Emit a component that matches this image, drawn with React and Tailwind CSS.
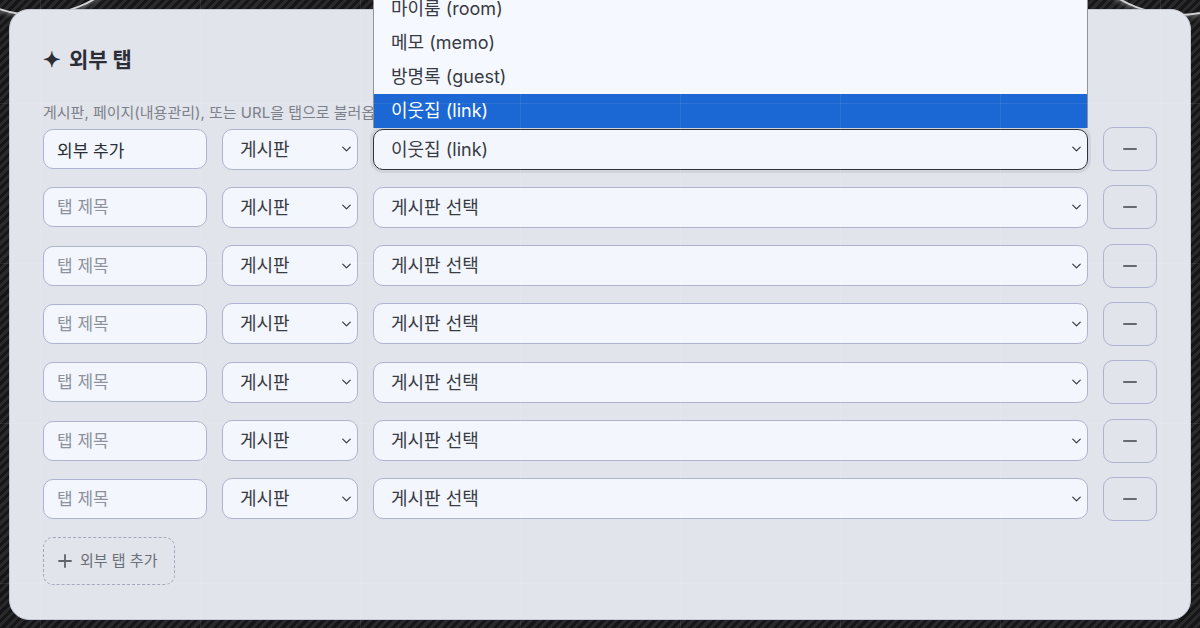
import { useState } from "react";

const FONT = { fontFamily: 'Inter, "Noto Sans CJK KR", sans-serif' };

const TYPES = ["게시판", "페이지", "URL"];
const TARGETS = ["게시판 선택", "마이룸 (room)", "메모 (memo)", "방명록 (guest)", "이웃집 (link)"];

const Chevron = () => (
  <svg width="15" height="15" viewBox="0 0 24 24" fill="none" stroke="#3a3d45" strokeWidth="2" strokeLinecap="round" strokeLinejoin="round">
    <path d="m6 9 6 6 6-6" />
  </svg>
);

const SelectBox = ({ value, options, className, focused, onChange }) => (
  <div className={`relative ${className}`}>
    <select
      value={value}
      onChange={(e) => onChange(e.target.value)}
      className={`appearance-none w-full h-[41px] rounded-[10px] bg-[#f3f6fd] text-[18px] text-[#383b43] pl-[17px] pr-8 outline-none ${
        focused ? "border-[1.5px] border-[#30323a] shadow-[0_0_0_3px_rgba(160,165,180,0.25)]" : "border border-[#aeb4cf]"
      }`}
    >
      {options.map((o) => (
        <option key={o}>{o}</option>
      ))}
    </select>
    <span className="pointer-events-none absolute right-[4px] top-1/2 -translate-y-1/2">
      <Chevron />
    </span>
  </div>
);

const TabRow = ({ row, index, onChange, onRemove, open }) => (
  <div className="flex items-center gap-[15px] h-[44px] relative">
    <input
      value={row.title}
      onChange={(e) => onChange(index, { ...row, title: e.target.value })}
      placeholder="탭 제목"
      className="w-[164px] h-[40px] rounded-[10px] border border-[#aeb4cf] bg-[#f3f6fd] px-[13px] text-[17px] text-[#2a2d34] placeholder:text-[#8c919c] outline-none"
    />
    <SelectBox
      className="w-[136px]"
      value={row.type}
      options={TYPES}
      onChange={(v) => onChange(index, { ...row, type: v })}
    />
    <div className="relative flex-1">
      <SelectBox
        className="w-full"
        value={row.target}
        options={TARGETS}
        focused={open}
        onChange={(v) => onChange(index, { ...row, target: v })}
      />
      {open && (
        <ul className="absolute left-0 right-0 bottom-full mb-[1px] bg-[#f5f8fe] border-x border-[#8f939c] text-[18px] text-[#383b43] z-20">
          {TARGETS.slice(1).map((t) => (
            <li
              key={t}
              className={`h-[34px] flex items-center pl-[17px] ${t === row.target ? "bg-[#1b67d3] text-white" : ""}`}
            >
              {t}
            </li>
          ))}
        </ul>
      )}
    </div>
    <button
      onClick={() => onRemove(index)}
      className="w-[54px] h-[44px] rounded-[10px] border border-[#aeb4cf] flex items-center justify-center"
    >
      <span className="block w-[14px] h-[2px] bg-[#666a73] rounded" />
    </button>
  </div>
);

export default function App() {
  const [rows, setRows] = useState([
    { title: "외부 추가", type: "게시판", target: "이웃집 (link)" },
    ...Array.from({ length: 6 }, () => ({ title: "", type: "게시판", target: "게시판 선택" })),
  ]);

  const updateRow = (i, r) => setRows(rows.map((x, idx) => (idx === i ? r : x)));
  const removeRow = (i) => setRows(rows.filter((_, idx) => idx !== i));
  const addRow = () => setRows([...rows, { title: "", type: "게시판", target: "게시판 선택" }]);

  return (
    <div
      style={FONT}
      className="relative w-[1200px] h-[628px] overflow-hidden bg-[repeating-linear-gradient(135deg,#161618_0px,#161618_3px,#2a2a2d_3px,#2a2a2d_6px)] p-[9px]"
    >
      {/* decorative rings */}
      <div className="absolute left-[-80px] top-[-216px] w-[232px] h-[232px] rounded-full border-2 border-white/80 shadow-[0_0_6px_rgba(255,255,255,0.5)]" />
      <div className="absolute left-[1062px] top-[-216px] w-[232px] h-[232px] rounded-full border-2 border-white/80 shadow-[0_0_6px_rgba(255,255,255,0.5)]" />

      <div className="relative z-10 h-[611px] rounded-[20px] border border-[#c3c8d6] bg-[#e1e4ea] px-[33px] pt-[36px]">
        <h2 className="flex items-center gap-[8px] text-[21px] font-bold text-[#2b2e36] leading-[28px]">
          <span className="text-[21px]">✦</span>
          외부 탭
        </h2>
        <p className="mt-[29px] text-[15px] leading-[20px] text-[#7c808b]">
          게시판, 페이지(내용관리), 또는 URL을 탭으로 불러옵니다.
        </p>

        <div className="mt-[4px] flex flex-col gap-[14.33px]">
          {rows.map((row, i) => (
            <TabRow key={i} row={row} index={i} open={i === 0} onChange={updateRow} onRemove={removeRow} />
          ))}
        </div>

        <button
          onClick={addRow}
          className="mt-[16px] h-[48px] w-[132px] px-[14px] rounded-[10px] border border-dashed border-[#a3a8bc] flex items-center gap-[8px] text-[15px] text-[#6b6f78]"
        >
          <svg width="14" height="14" viewBox="0 0 14 14" stroke="#5f636c" strokeWidth="1.8" strokeLinecap="round">
            <path d="M7 1v12M1 7h12" />
          </svg>
          외부 탭 추가
        </button>
      </div>

      {/* faint grid */}
      <div className="pointer-events-none absolute inset-0 z-30 bg-[linear-gradient(to_right,rgba(255,255,255,0.08)_1px,transparent_1px),linear-gradient(to_bottom,rgba(255,255,255,0.08)_1px,transparent_1px)] bg-[size:160px_160px] bg-[position:40px_103px]" />
    </div>
  );
}
